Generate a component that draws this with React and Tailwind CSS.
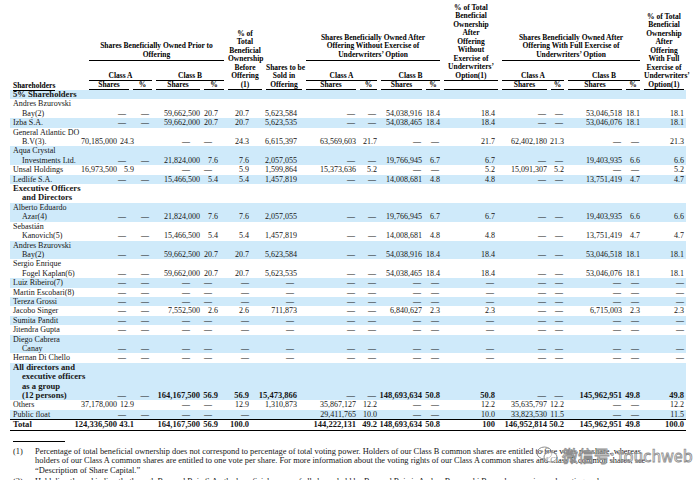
const D = "—";
const ALL_DASH = Array(16).fill(D);

const ROWS = [
  { name: ["5% Shareholders"], section: true },
  { name: ["Andres Bzurovski", "Bay(2)"], vals: [D, D, "59,662,500", "20.7", "20.7", "5,623,584", D, D, "54,038,916", "18.4", "18.4", D, D, "53,046,518", "18.1", "18.1"] },
  { name: ["Izba S.A."], vals: [D, D, "59,662,000", "20.7", "20.7", "5,623,535", D, D, "54,038,465", "18.4", "18.4", D, D, "53,046,076", "18.1", "18.1"] },
  { name: ["General Atlantic DO", "B.V(3)."], vals: ["70,185,000", "24.3", D, D, "24.3", "6,615,397", "63,569,603", "21.7", D, D, "21.7", "62,402,180", "21.3", D, D, "21.3"] },
  { name: ["Aqua Crystal", "Investments Ltd."], vals: [D, D, "21,824,000", "7.6", "7.6", "2,057,055", D, D, "19,766,945", "6.7", "6.7", D, D, "19,403,935", "6.6", "6.6"] },
  { name: ["Unsal Holdings"], vals: ["16,973,500", "5.9", D, D, "5.9", "1,599,864", "15,373,636", "5.2", D, D, "5.2", "15,091,307", "5.2", D, D, "5.2"] },
  { name: ["Ledlife S.A."], vals: [D, D, "15,466,500", "5.4", "5.4", "1,457,819", D, D, "14,008,681", "4.8", "4.8", D, D, "13,751,419", "4.7", "4.7"] },
  { name: ["Executive Officers", "and Directors"], section: true },
  { name: ["Alberto Eduardo", "Azar(4)"], vals: [D, D, "21,824,000", "7.6", "7.6", "2,057,055", D, D, "19,766,945", "6.7", "6.7", D, D, "19,403,935", "6.6", "6.6"] },
  { name: ["Sebastián", "Kanovich(5)"], vals: [D, D, "15,466,500", "5.4", "5.4", "1,457,819", D, D, "14,008,681", "4.8", "4.8", D, D, "13,751,419", "4.7", "4.7"] },
  { name: ["Andres Bzurovski", "Bay(2)"], vals: [D, D, "59,662,500", "20.7", "20.7", "5,623,584", D, D, "54,038,916", "18.4", "18.4", D, D, "53,046,518", "18.1", "18.1"] },
  { name: ["Sergio Enrique", "Fogel Kaplan(6)"], vals: [D, D, "59,662,000", "20.7", "20.7", "5,623,535", D, D, "54,038,465", "18.4", "18.4", D, D, "53,046,076", "18.1", "18.1"] },
  { name: ["Luiz Ribeiro(7)"], vals: ALL_DASH },
  { name: ["Martin Escobari(8)"], vals: ALL_DASH },
  { name: ["Tereza Grossi"], vals: ALL_DASH },
  { name: ["Jacobo Singer"], vals: [D, D, "7,552,500", "2.6", "2.6", "711,873", D, D, "6,840,627", "2.3", "2.3", D, D, "6,715,003", "2.3", "2.3"] },
  { name: ["Sumita Pandit"], vals: ALL_DASH },
  { name: ["Jitendra Gupta"], vals: ALL_DASH },
  { name: ["Diego Cabrera", "Canay"], vals: ALL_DASH },
  { name: ["Hernan Di Chello"], vals: ALL_DASH },
  { name: ["All directors and", "executive officers", "as a group", "(12 persons)"], bold: true, vals: [D, D, "164,167,500", "56.9", "56.9", "15,473,866", D, D, "148,693,634", "50.8", "50.8", D, D, "145,962,951", "49.8", "49.8"] },
  { name: ["Others"], vals: ["37,178,000", "12.9", D, D, "12.9", "1,310,873", "35,867,127", "12.2", D, D, "12.2", "35,635,797", "12.2", D, D, "12.2"] },
  { name: ["Public float"], vals: [D, D, D, D, D, "", "29,411,765", "10.0", D, D, "10.0", "33,823,530", "11.5", D, D, "11.5"] },
  { name: ["Total"], bold: true, total: true, vals: ["124,336,500", "43.1", "164,167,500", "56.9", "100.0", "", "144,222,131", "49.2", "148,693,634", "50.8", "100", "146,952,814", "50.2", "145,962,951", "49.8", "100.0"] },
];

// 17 columns, table runs from x=10 to x=686
const GRID = "grid grid-cols-[77px_44px_23px_48px_24px_38px_40px_54px_21px_45px_18px_58px_49px_17px_58px_18px_44px]";

// right padding of figures / of dashes, per numeric column (filing style: figures and dashes don't line up)
const NUM_PAD = ["pr-[14px]", "pr-[20px]", "pr-[2px]", "pr-[8px]", "pr-[15px]", "pr-[7px]", "pr-[2px]", "pr-[2px]", "pr-[2px]", "pr-[2px]", "pr-[5px]", "pr-[2px]", "pr-[2px]", "pr-[2px]", "pr-[2px]", "pr-[2px]"];
const DASH_PAD = ["pr-[5px]", "pr-[5px]", "pr-[12px]", "pr-[14px]", "pr-[15px]", "pr-[10px]", "pr-[3px]", "pr-[3px]", "pr-[3px]", "pr-[3px]", "pr-[6px]", "pr-[3px]", "pr-[3px]", "pr-[3px]", "pr-[3px]", "pr-[2px]"];

function H({ className = "", children }) {
  return (
    <div className={`self-end px-[2px] text-center ${className}`}>
      <div className="border-b border-black">{children}</div>
    </div>
  );
}

function Lines({ items }) {
  return items.map((t, i) => <div key={i} className="whitespace-nowrap">{t}</div>);
}

function Row({ r, i }) {
  const bg = i % 2 === 0 ? "bg-[#cfeafa]" : "";
  const big = r.section || r.bold;
  return (
    <div className={`${GRID} ${bg} ${r.total ? "border-y border-black" : ""} ${r.bold ? "font-bold text-[8.5px]" : ""}`}>
      <div className={`pl-[3px] whitespace-nowrap ${big ? "font-bold text-[8.6px]" : ""}`}>
        <div>{r.name[0]}</div>
        {r.name.slice(1).map((n) => (
          <div key={n} className="pl-[9px]">{n}</div>
        ))}
      </div>
      {r.vals &&
        r.vals.map((v, j) => (
          <div key={j} className={`self-end flex justify-end whitespace-nowrap ${v === D ? DASH_PAD[j] : NUM_PAD[j]}`}>
            {v}
          </div>
        ))}
    </div>
  );
}

export default function App() {
  return (
    <div className="relative w-[700px] h-[480px] overflow-hidden bg-white text-[#151515] font-['Liberation_Serif','Times_New_Roman',serif]">
      <div className="ml-[10px] w-[676px] pt-px">
        {/* column headings */}
        <div className={`${GRID} grid-rows-[60px_20px_9px] text-[7.5px] leading-[8.5px] font-bold text-black`}>
          <div className="col-start-1 row-start-1 row-span-3 self-end pl-[3px]">
            <span className="border-b border-black">Shareholders</span>
          </div>
          <H className="col-start-2 col-span-4 row-start-1">
            <div className="pb-px">Shares Beneficially Owned Prior to<br />Offering</div>
          </H>
          <H className="col-start-6 row-start-1 row-span-3">
            <Lines items={["% of", "Total", "Beneficial", "Ownership", "Before", "Offering", "(1)"]} />
          </H>
          <H className="col-start-7 row-start-1 row-span-3">
            <Lines items={["Shares to be", "Sold in", "Offering"]} />
          </H>
          <H className="col-start-8 col-span-4 row-start-1">
            <div className="pb-px">Shares Beneficially Owned After<br />Offering Without Exercise of<br />Underwriters’ Option</div>
          </H>
          <H className="col-start-12 row-start-1 row-span-2">
            <Lines items={["% of Total", "Beneficial", "Ownership", "After", "Offering", "Without", "Exercise of", "Underwriters’", "Option(1)"]} />
          </H>
          <H className="col-start-13 col-span-4 row-start-1">
            <div className="pb-px">Shares Beneficially Owned After<br />Offering With Full Exercise of<br />Underwriters’ Option</div>
          </H>
          <H className="col-start-17 row-start-1 row-span-3">
            <Lines items={["% of Total", "Beneficial", "Ownership", "After", "Offering", "With Full", "Exercise of", "Underwriters’", "Option(1)"]} />
          </H>

          <H className="col-start-2 col-span-2 row-start-2">Class A</H>
          <H className="col-start-4 col-span-2 row-start-2">Class B</H>
          <H className="col-start-8 col-span-2 row-start-2">Class A</H>
          <H className="col-start-10 col-span-2 row-start-2">Class B</H>
          <H className="col-start-13 col-span-2 row-start-2">Class A</H>
          <H className="col-start-15 col-span-2 row-start-2">Class B</H>

          <H className="col-start-2 row-start-3">Shares</H>
          <H className="col-start-3 row-start-3">%</H>
          <H className="col-start-4 row-start-3">Shares</H>
          <H className="col-start-5 row-start-3">%</H>
          <H className="col-start-8 row-start-3">Shares</H>
          <H className="col-start-9 row-start-3">%</H>
          <H className="col-start-10 row-start-3">Shares</H>
          <H className="col-start-11 row-start-3">%</H>
          <H className="col-start-12 row-start-3">&nbsp;</H>
          <H className="col-start-13 row-start-3">Shares</H>
          <H className="col-start-14 row-start-3">%</H>
          <H className="col-start-15 row-start-3">Shares</H>
          <H className="col-start-16 row-start-3">%</H>
        </div>

        {/* body */}
        <div className="text-[8px] leading-[9.4px]">
          {ROWS.map((r, i) => (
            <Row key={i} r={r} i={i} />
          ))}
        </div>
      </div>

      {/* footnotes */}
      <div className="mt-[10px] ml-[13px] w-[52px] border-t border-black" />
      <div className="mt-[5px] text-[8.4px] leading-[9.7px] text-[#151515]">
        <div className="flex">
          <div className="w-[35px] pl-[13px] shrink-0">(1)</div>
          <div>
            <div className="whitespace-nowrap">Percentage of total beneficial ownership does not correspond to percentage of total voting power. Holders of our Class B common shares are entitled to five votes per share, whereas</div>
            <div className="whitespace-nowrap">holders of our Class A common shares are entitled to one vote per share. For more information about the voting rights of our Class A common shares and Class B common shares, see</div>
            <div className="whitespace-nowrap">“Description of Share Capital.”</div>
          </div>
        </div>
        <div className="flex mt-px">
          <div className="w-[35px] pl-[13px] shrink-0">(2)</div>
          <div className="whitespace-nowrap">Held directly and indirectly through Bay and Ryiz S.A., the beneficial owner of all shares held by Bay and Ryiz is Andres Bzurovski Bay, who exercises sole voting and</div>
        </div>
      </div>

      {/* watermark */}
      <div className="absolute left-[536px] top-[446px] flex items-center gap-[4px] whitespace-nowrap text-[16px] leading-none text-white/40 [-webkit-text-stroke:0.8px_#8e8e8e] font-['Noto_Sans_CJK_SC',sans-serif]">
        <svg width="22" height="18" viewBox="0 0 22 18" fill="none" stroke="#8e8e8e" strokeWidth="1">
          <ellipse cx="8.5" cy="7" rx="7.5" ry="6" />
          <ellipse cx="14.5" cy="11" rx="6.5" ry="5" fill="white" fillOpacity="0.5" />
          <circle cx="6" cy="5.5" r="0.8" fill="#8e8e8e" />
          <circle cx="11" cy="5.5" r="0.8" fill="#8e8e8e" />
        </svg>
        <span>微信号: touchweb</span>
      </div>
    </div>
  );
}
